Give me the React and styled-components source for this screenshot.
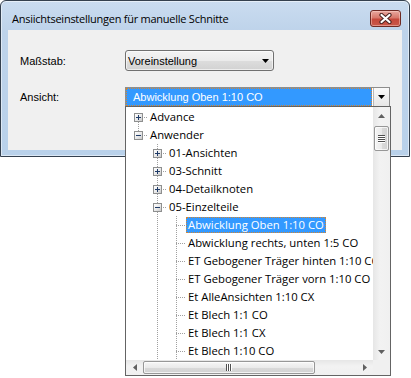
import React from 'react';
import styled, { createGlobalStyle } from 'styled-components';

const Global = createGlobalStyle`
  html, body { margin: 0; padding: 0; background: #ffffff; }
  body {
    width: 411px;
    height: 378px;
    overflow: hidden;
    font-family: "Liberation Sans", Arial, sans-serif;
  }
`;

const Page = styled.div`
  width: 411px;
  height: 378px;
`;

const Window = styled.div`
  width: 410px;
  box-sizing: border-box;
  border: 1px solid #34404f;
  border-radius: 6px 6px 0 0;
  background: linear-gradient(to bottom, #cadcf0 0px, #bed3ea 30px, #b9d1ea 100%);
  box-shadow: inset 0 0 0 1px rgba(255, 255, 255, 0.5);
  padding: 0 7px 6px 7px;
  display: flex;
  flex-direction: column;
`;

const TitleBar = styled.div`
  height: 29px;
  display: flex;
  align-items: flex-start;
  justify-content: space-between;
`;

const Title = styled.div`
  margin: 10px 0 0 4px;
  font-family: "Open Sans", "Noto Sans", sans-serif;
  font-size: 11px;
  letter-spacing: -0.25px;
  line-height: 16px;
  color: #000;
`;

const CloseButton = styled.div`
  margin: 9px 1px 0 0;
  width: 31px;
  height: 17px;
  box-sizing: border-box;
  border: 1px solid #6e2a24;
  border-radius: 3px;
  background: linear-gradient(to bottom, #e8a89f 0%, #d7786b 45%, #c5483b 55%, #c9584a 100%);
  box-shadow: inset 0 0 0 1px rgba(255, 220, 210, 0.45);
  display: flex;
  align-items: center;
  justify-content: center;
`;

const Client = styled.div`
  height: 120px;
  background: #f0f0f0;
  box-sizing: border-box;
  padding: 20px 0 0 12px;
  display: grid;
  grid-template-columns: 105px auto;
  align-content: start;
  row-gap: 16px;
  align-items: center;
  justify-items: start;
`;

const FieldLabel = styled.div`
  font-size: 11px;
  color: #000;
`;

const ButtonCombo = styled.div`
  width: 149px;
  height: 21px;
  box-sizing: border-box;
  border: 1px solid #707070;
  border-radius: 3px;
  background: linear-gradient(to bottom, #f3f3f3 0%, #ebebeb 50%, #dddddd 51%, #d2d2d2 100%);
  box-shadow: inset 0 0 0 1px rgba(255, 255, 255, 0.6);
  display: flex;
  align-items: center;
  justify-content: space-between;
  padding: 0 4px 0 2px;
  font-size: 11px;
  color: #000;
`;

const EditCombo = styled.div`
  position: relative;
  width: 265px;
  height: 20px;
  box-sizing: border-box;
  border: 1px solid #8d8d8d;
  background: #fff;
  display: flex;
`;

const SelectedField = styled.div`
  flex: 1;
  background: #3399ff;
  color: #fff;
  font-size: 11px;
  line-height: 16px;
  padding-left: 6px;
  border: 1px dotted #d5852f;
  margin-right: 1px;
`;

const ArrowButton = styled.div`
  width: 16px;
  box-sizing: border-box;
  border-left: 1px solid #b8b8b8;
  background: linear-gradient(to bottom, #fafafa, #e6e6e6);
  display: flex;
  align-items: center;
  justify-content: center;
`;

const Popup = styled.div`
  position: absolute;
  top: 100%;
  left: -1px;
  width: 266px;
  height: 270px;
  box-sizing: border-box;
  border: 1px solid #646464;
  background: #fff;
  display: grid;
  grid-template-columns: 247px 17px;
  grid-template-rows: 253px 15px;
  z-index: 2;
`;

const TreeArea = styled.div`
  overflow: hidden;
  padding: 1px 0 0 3px;
  box-sizing: border-box;
`;

const TreeRow = styled.div`
  height: 18px;
  display: flex;
  align-items: center;
  white-space: nowrap;
`;

const V = 'repeating-linear-gradient(to bottom, #a0a0a0 0 1px, transparent 1px 2px)';
const H = 'repeating-linear-gradient(to right, #a0a0a0 0 1px, transparent 1px 2px)';

const guideLayers = ({ $kind, $up, $down }) => {
  const layers = [];
  if ($kind === 'line') layers.push([V, '9px 0', '1px 18px']);
  if ($kind === 'node') {
    if ($up) layers.push([V, '9px 0', '1px 9px']);
    if ($down) layers.push([V, '9px 10px', '1px 8px']);
    layers.push([H, '9px 9px', '10px 1px']);
  }
  if (!layers.length) return 'background: none;';
  return `
    background-image: ${layers.map((l) => l[0]).join(', ')};
    background-position: ${layers.map((l) => l[1]).join(', ')};
    background-size: ${layers.map((l) => l[2]).join(', ')};
    background-repeat: no-repeat;
  `;
};

const Guide = styled.div`
  width: 19px;
  height: 18px;
  flex: none;
  box-sizing: border-box;
  padding: 5px 0 0 5px;
  ${guideLayers}
`;

const SIGN = '#1f3b68';
const Expander = styled.div`
  width: 9px;
  height: 9px;
  box-sizing: border-box;
  border: 1px solid #8e8f8f;
  background-image:
    linear-gradient(${SIGN}, ${SIGN}),
    ${(p) => (p.$plus ? `linear-gradient(${SIGN}, ${SIGN}),` : '')}
    linear-gradient(135deg, #ffffff 0%, #e9e9e9 55%, #c9c9c9 100%);
  background-position: 1px 3px, ${(p) => (p.$plus ? '3px 1px,' : '')} 0 0;
  background-size: 5px 1px, ${(p) => (p.$plus ? '1px 5px,' : '')} 100% 100%;
  background-repeat: no-repeat;
`;

const NodeText = styled.span`
  display: inline-block;
  height: 16px;
  box-sizing: border-box;
  line-height: 14px;
  padding: 0 1px;
  border: 1px ${(p) => (p.$selected ? 'dotted #d5852f' : 'solid transparent')};
  background: ${(p) => (p.$selected ? '#3399ff' : 'transparent')};
  color: ${(p) => (p.$selected ? '#ffffff' : '#000000')};
  font-family: "Open Sans", "Noto Sans", sans-serif;
  font-size: 11.3px;
`;

const VScroll = styled.div`
  background: linear-gradient(to right, #e6e6e6, #f2f2f2 40%, #f0f0f0);
  display: flex;
  flex-direction: column;
  align-items: center;
`;

const HScroll = styled.div`
  background: linear-gradient(to bottom, #e6e6e6, #f2f2f2 40%, #f0f0f0);
  display: flex;
  align-items: center;
`;

const Corner = styled.div`
  background: #f0f0f0;
`;

const ArrowCell = styled.div`
  width: 17px;
  height: ${(p) => (p.$horizontal ? '15px' : '17px')};
  flex: none;
  display: flex;
  align-items: center;
  justify-content: center;
`;

const VThumb = styled.div`
  width: 15px;
  height: 25px;
  margin-top: 2px;
  box-sizing: border-box;
  border: 1px solid #979797;
  border-radius: 2px;
  background: linear-gradient(to right, #f6f6f6 0%, #eaeaea 50%, #dadada 51%, #d2d2d2 100%);
  box-shadow: inset 0 0 0 1px rgba(255, 255, 255, 0.7);
  display: flex;
  align-items: center;
  justify-content: center;
`;

const HThumb = styled.div`
  width: 172px;
  height: 13px;
  box-sizing: border-box;
  border: 1px solid #979797;
  border-radius: 2px;
  background: linear-gradient(to bottom, #f6f6f6 0%, #eaeaea 50%, #dadada 51%, #d2d2d2 100%);
  box-shadow: inset 0 0 0 1px rgba(255, 255, 255, 0.7);
  display: flex;
  align-items: center;
  justify-content: center;
`;

const Grip = styled.div`
  width: ${(p) => (p.$vertical ? '7px' : '6px')};
  height: ${(p) => (p.$vertical ? '8px' : '7px')};
  background: ${(p) =>
    p.$vertical
      ? 'repeating-linear-gradient(to bottom, #4f4f4f 0 1px, #ffffff 1px 2px)'
      : 'repeating-linear-gradient(to right, #4f4f4f 0 1px, #ffffff 1px 2px)'};
`;

const Spacer = styled.div`
  flex: 1;
`;

const Tri = ({ dir, color = '#000', w = 7, h = 4 }) => {
  const pts = {
    down: `0,0 ${w},0 ${w / 2},${h}`,
    up: `0,${h} ${w},${h} ${w / 2},0`,
    left: `${w},0 ${w},${h} 0,${h / 2}`,
    right: `0,0 0,${h} ${w},${h / 2}`,
  }[dir];
  return (
    <svg width={w} height={h} viewBox={`0 0 ${w} ${h}`} style={{ display: 'block' }}>
      <polygon points={pts} fill={color} />
    </svg>
  );
};

const rows = [
  { text: 'Advance', guides: [{ kind: 'node', down: true, box: 'plus' }] },
  { text: 'Anwender', guides: [{ kind: 'node', up: true, box: 'minus' }] },
  { text: '01-Ansichten', guides: [{}, { kind: 'node', up: true, down: true, box: 'plus' }] },
  { text: '03-Schnitt', guides: [{}, { kind: 'node', up: true, down: true, box: 'plus' }] },
  { text: '04-Detailknoten', guides: [{}, { kind: 'node', up: true, down: true, box: 'plus' }] },
  { text: '05-Einzelteile', guides: [{}, { kind: 'node', up: true, down: true, box: 'minus' }] },
  { text: 'Abwicklung Oben 1:10 CO', selected: true },
  { text: 'Abwicklung rechts, unten 1:5 CO' },
  { text: 'ET Gebogener Träger hinten 1:10 CO' },
  { text: 'ET Gebogener Träger vorn 1:10 CO' },
  { text: 'Et AlleAnsichten 1:10 CX' },
  { text: 'Et Blech 1:1 CO' },
  { text: 'Et Blech 1:1 CX' },
  { text: 'Et Blech 1:10 CO' },
];

const leafGuides = [{}, { kind: 'line' }, { kind: 'node', up: true, down: true }];

export default function App() {
  return (
    <Page>
      <Global />
      <Window>
        <TitleBar>
          <Title>Ansiichtseinstellungen für manuelle Schnitte</Title>
          <CloseButton>
            <svg width="13" height="11" viewBox="0 0 13 11" style={{ display: 'block' }}>
              <path d="M2.5 2 L10.5 9 M10.5 2 L2.5 9" stroke="#4a2320" strokeWidth="4.2" strokeLinecap="round" />
              <path d="M2.5 2 L10.5 9 M10.5 2 L2.5 9" stroke="#ffffff" strokeWidth="2.2" strokeLinecap="round" />
            </svg>
          </CloseButton>
        </TitleBar>
        <Client>
          <FieldLabel>Maßstab:</FieldLabel>
          <ButtonCombo>
            <span>Voreinstellung</span>
            <Tri dir="down" />
          </ButtonCombo>
          <FieldLabel>Ansicht:</FieldLabel>
          <EditCombo>
            <SelectedField>Abwicklung Oben 1:10 CO</SelectedField>
            <ArrowButton>
              <Tri dir="down" />
            </ArrowButton>
            <Popup>
              <TreeArea>
                {rows.map((r) => {
                  const guides = r.guides || leafGuides;
                  return (
                    <TreeRow key={r.text}>
                      {guides.map((g, i) => (
                        <Guide key={i} $kind={g.kind} $up={g.up} $down={g.down}>
                          {g.box && <Expander $plus={g.box === 'plus'} />}
                        </Guide>
                      ))}
                      <NodeText $selected={r.selected}>{r.text}</NodeText>
                    </TreeRow>
                  );
                })}
              </TreeArea>
              <VScroll>
                <ArrowCell>
                  <Tri dir="up" color="#606060" />
                </ArrowCell>
                <VThumb>
                  <Grip $vertical />
                </VThumb>
                <Spacer />
                <ArrowCell>
                  <Tri dir="down" color="#606060" />
                </ArrowCell>
              </VScroll>
              <HScroll>
                <ArrowCell $horizontal>
                  <Tri dir="left" color="#606060" w={4} h={7} />
                </ArrowCell>
                <HThumb>
                  <Grip />
                </HThumb>
                <Spacer />
                <ArrowCell $horizontal>
                  <Tri dir="right" color="#606060" w={4} h={7} />
                </ArrowCell>
              </HScroll>
              <Corner />
            </Popup>
          </EditCombo>
        </Client>
      </Window>
    </Page>
  );
}
